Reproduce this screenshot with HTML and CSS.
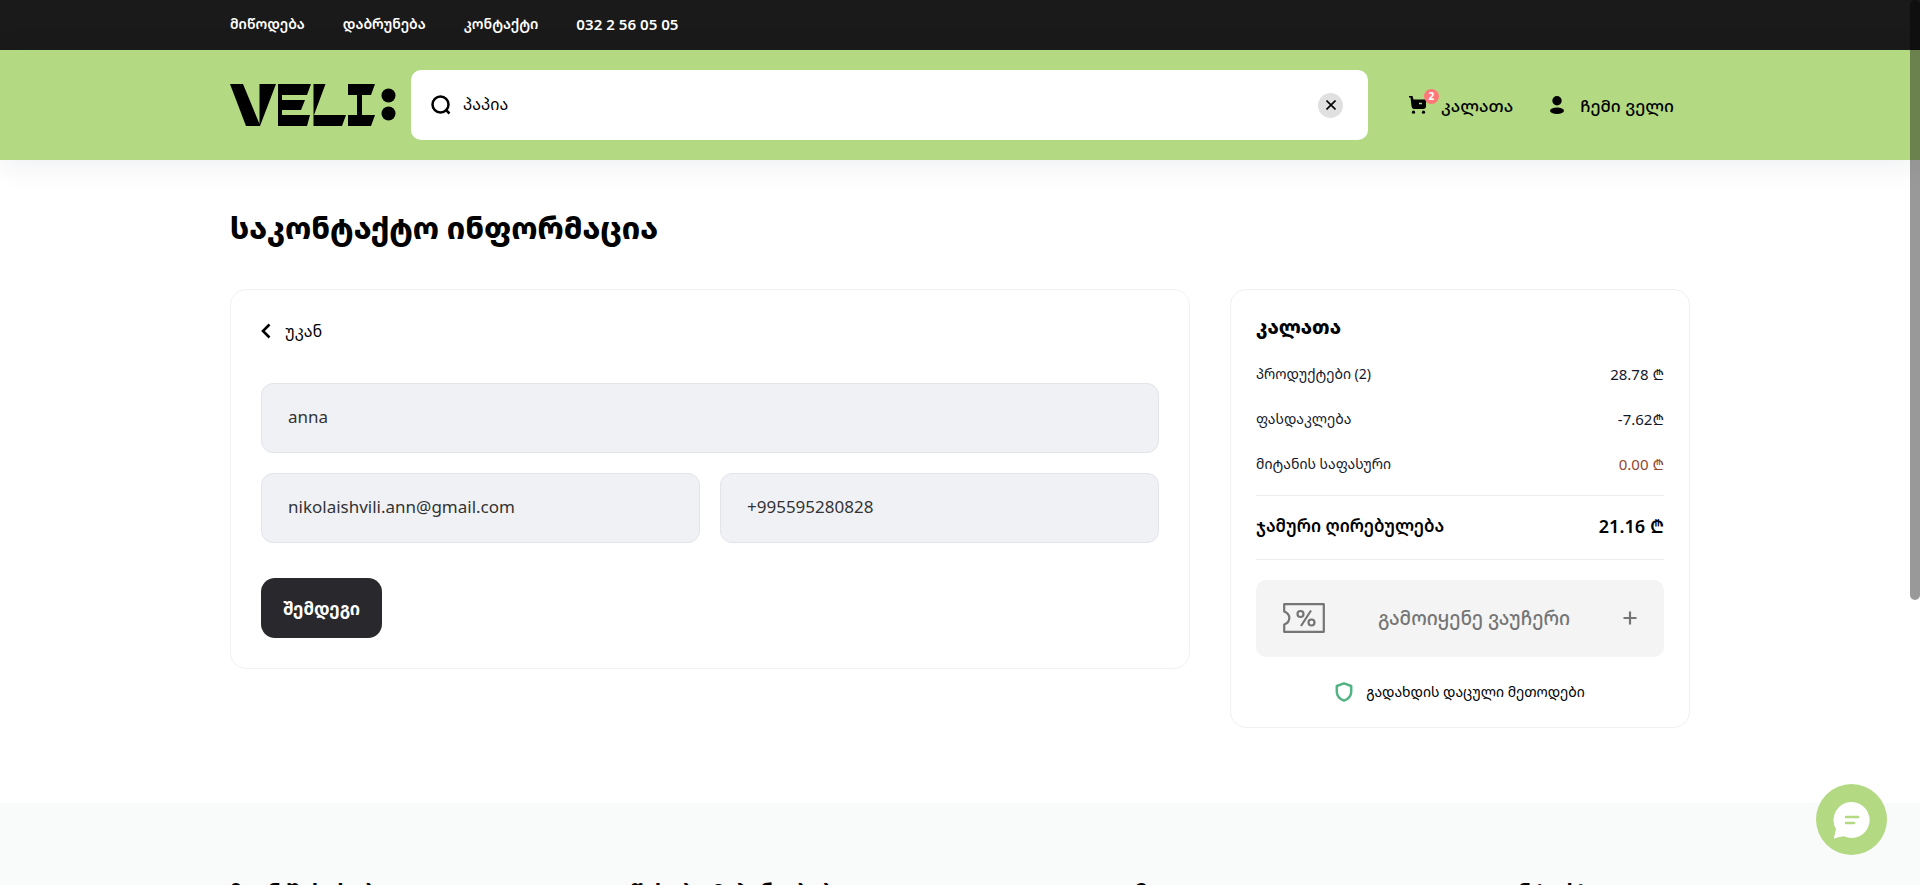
FILE: index.html
```html
<!DOCTYPE html>
<html lang="ka">
<head>
<meta charset="utf-8">
<meta name="viewport" content="width=device-width, initial-scale=1">
<title>VELI — საკონტაქტო ინფორმაცია</title>
<link rel="stylesheet" href="styles.css">
</head>
<body>
<nav class="topbar">
  <div class="container topbar-links">
    <a href="#">მიწოდება</a>
    <a href="#">დაბრუნება</a>
    <a href="#">კონტაქტი</a>
    <a class="phone" href="tel:0322560505">032 2 56 05 05</a>
  </div>
</nav>
<header class="header">
  <div class="container header-row">
    <a class="logo" href="#" aria-label="VELI">
      <svg width="166" height="42" viewBox="0 0 166 42" aria-hidden="true">
        <path d="M0 0H13L29.500 40V0H46L30 42H16ZM48 0H81L77 11H52V16H75L71 26H52V31H80L77 42H48ZM83.500 0H95.500L84 31H116L112 42H83.500ZM118 0H145L141 11H132V31H145L141 42H118V31H127V11H118Z"/>
        <circle cx="158.500" cy="11.500" r="7"/><circle cx="158.500" cy="29.500" r="7"/>
      </svg>
    </a>
    <form class="search" role="search">
      <svg class="search-icon" width="20" height="20" viewBox="0 0 20 20" fill="none" stroke="#000" stroke-width="2.500" aria-hidden="true"><circle cx="9.500" cy="9.500" r="8"/><path d="M14.500 14.500 18.500 18.500"/></svg>
      <input type="text" aria-label="ძიება" value="პაპია">
      <button class="clear" type="button" aria-label="გასუფთავება">
        <svg width="10" height="10" viewBox="0 0 10 10" fill="none" stroke="#000" stroke-width="1.600"><path d="M0.500 0.500 9.500 9.500M9.500 0.500 0.500 9.500"/></svg>
      </button>
    </form>
    <div class="actions">
      <a class="action action-cart" href="#">
        <span class="cart-icon">
          <svg width="18" height="18" viewBox="0 0 18 18" aria-hidden="true"><path d="M0 0H3.500L4.500 3.500H17V10Q17 13 14 13H5Q3 13 2.500 10L1.500 1.500H0Z"/><circle cx="4.500" cy="16.200" r="1.600"/><circle cx="14.500" cy="16.200" r="1.600"/><path d="M10 7.500H13" stroke="#b3d983" stroke-width="1.500"/></svg>
          <span class="badge">2</span>
        </span>
        <span>კალათა</span>
      </a>
      <a class="action action-user" href="#">
        <svg width="14" height="18" viewBox="0 0 14 18" aria-hidden="true"><circle cx="7" cy="4.700" r="4.700"/><ellipse cx="7" cy="14.800" rx="7" ry="3.200"/></svg>
        <span>ჩემი ველი</span>
      </a>
    </div>
  </div>
</header>
<main class="container main">
  <h1>საკონტაქტო ინფორმაცია</h1>
  <div class="columns">
    <form class="card contact">
      <a class="back" href="#">
        <svg width="10" height="16" viewBox="0 0 10 16" fill="none" stroke="#000" stroke-width="2.600" aria-hidden="true"><path d="M8.500 1.500 2 8 8.500 14.500"/></svg>
        <span>უკან</span>
      </a>
      <div class="fields">
        <input class="wide" type="text" aria-label="სახელი" value="anna">
        <input type="email" aria-label="ელფოსტა" value="nikolaishvili.ann@gmail.com">
        <input type="tel" aria-label="ტელეფონი" value="+995595280828">
      </div>
      <button class="next" type="button">შემდეგი</button>
    </form>
    <aside class="card cart">
      <h2>კალათა</h2>
      <dl class="rows">
        <div class="row"><dt>პროდუქტები (2)</dt><dd>28.78 ₾</dd></div>
        <div class="row"><dt>ფასდაკლება</dt><dd>-7.62₾</dd></div>
        <div class="row"><dt>მიტანის საფასური</dt><dd class="fee">0.00 ₾</dd></div>
        <div class="row total"><dt>ჯამური ღირებულება</dt><dd>21.16 ₾</dd></div>
      </dl>
      <button class="voucher" type="button">
        <svg width="42" height="30" viewBox="0 0 42 30" fill="none" stroke="#757575" stroke-width="2.200" aria-hidden="true"><path d="M1.200 1.200H40.800V28.800H1.200V21.500C8 19 8 11 1.200 8.500Z" stroke-linejoin="round"/><circle cx="17.500" cy="11" r="3"/><circle cx="28.500" cy="19.500" r="3"/><path d="M28 7.500 18 23"/></svg>
        <span>გამოიყენე ვაუჩერი</span>
        <svg width="14" height="14" viewBox="0 0 14 14" stroke="#757575" stroke-width="2.200" aria-hidden="true"><path d="M7 0.500V13.500M0.500 7H13.500"/></svg>
      </button>
      <p class="secure">
        <svg width="18" height="20" viewBox="0 0 18 20" fill="none" stroke="#53b483" stroke-width="2.500" stroke-linejoin="round" aria-hidden="true"><path d="M9 1.300 16.200 4V10Q16 16 9 18.700Q2 16 1.800 10V4Z"/></svg>
        <span>გადახდის დაცული მეთოდები</span>
      </p>
    </aside>
  </div>
</main>
<footer class="footer">
  <div class="container footer-grid">
    <h3>ჩვენ შესახებ</h3>
    <h3>წესები &amp; პირობები</h3>
    <h3>გამოგვყევი</h3>
    <h3>კონტაქტი</h3>
  </div>
</footer>
<button class="chat" type="button" aria-label="ჩატი">
  <svg width="38" height="38" viewBox="0 0 38 38" aria-hidden="true"><path d="M19 1A18 18 0 1 1 11 35.300Q6 35.500 1.500 37.500Q1 37.500 1 36.500L3 28A18 18 0 0 1 19 1Z" fill="#fff"/><path d="M13 16H25M13 22H21" stroke="#b3d983" stroke-width="2.500" stroke-linecap="round"/></svg>
</button>
<div class="scroll-thumb"></div>
</body>
</html>
```
FILE: styles.css
```css
* { box-sizing: border-box; }

body {
  margin: 0;
  height: 100vh;
  overflow: hidden;
  background: #fff;
  color: #000;
  font-family: "Noto Sans Georgian", "Noto Sans", "DejaVu Sans", sans-serif;
  font-size: 14px;
}

a { color: inherit; text-decoration: none; }
h1, h2, h3, p, dl, dd { margin: 0; }
svg { display: block; flex: none; }
input, button { font: inherit; }

.container {
  max-width: 1500px;
  margin: 0 auto;
  padding: 0 20px;
}

.topbar { background: #1a1a1a; color: #fff; }
.topbar-links {
  display: flex;
  gap: 38px;
  height: 50px;
  padding-bottom: 3px;
  align-items: center;
  font-size: 14px;
  font-weight: 600;
}
.phone { font-size: 15px; }

.header {
  background: #b3d983;
  box-shadow: 0 4px 30px rgba(30, 40, 60, 0.08);
}
.header-row {
  display: flex;
  align-items: center;
  height: 110px;
}
.logo { margin-right: 15px; }
.search {
  display: flex;
  flex: 1;
  align-items: center;
  gap: 12px;
  height: 70px;
  padding: 0 25px 0 20px;
  border-radius: 10px;
  background: #fff;
}
.search input {
  flex: 1;
  min-width: 0;
  padding: 0 0 2px;
  border: 0;
  outline: 0;
  background: none;
  font-size: 16px;
}
.clear {
  display: grid;
  place-items: center;
  width: 25px;
  height: 25px;
  padding: 0;
  border: 0;
  border-radius: 50%;
  background: #e0e0e0;
}
.actions {
  display: flex;
  justify-content: space-between;
  width: 322px;
  padding: 0 16px 0 41px;
  font-size: 17px;
  font-weight: 500;
}
.action { display: flex; align-items: center; }
.action-cart { gap: 14px; }
.action-user { gap: 16px; }
.cart-icon { position: relative; }
.badge {
  position: absolute;
  top: -7px;
  right: -12px;
  width: 15px;
  height: 15px;
  border-radius: 50%;
  background: #ff7878;
  color: #fff;
  font-size: 10px;
  font-weight: 700;
  line-height: 15px;
  text-align: center;
}

.main { padding-top: 48px; padding-bottom: 75px; }
h1 {
  margin-bottom: 41px;
  font-size: 30px;
  font-weight: 800;
  line-height: 40px;
}
.columns {
  display: grid;
  grid-template-columns: 24fr minmax(400px, 460px);
  gap: 40px;
  align-items: start;
}
.card {
  border: 1px solid #f2f2f5;
  border-radius: 16px;
}
.contact { padding: 29px 30px 30px; }
.back {
  display: inline-flex;
  align-items: center;
  gap: 14px;
  height: 24px;
  font-size: 16px;
}
.fields {
  display: grid;
  grid-template-columns: 1fr 1fr;
  gap: 20px;
  margin: 40px 0 35px;
}
.fields input {
  width: 100%;
  height: 70px;
  padding: 0 26px 3px;
  border: 1px solid #e3e4ea;
  border-radius: 12px;
  background: #f0f1f5;
  color: #333;
  font-size: 17px;
}
.fields .wide { grid-column: 1 / -1; }
.next {
  height: 60px;
  padding: 0 22px;
  border: 0;
  border-radius: 14px;
  background: #29282d;
  color: #fff;
  font-size: 17px;
  font-weight: 700;
}

.cart { padding: 23px 25px 25px; border-color: #f0f0f4; }
h2 { font-size: 19px; font-weight: 800; line-height: 28px; }
.rows { margin-top: 10px; }
.row {
  display: flex;
  justify-content: space-between;
  align-items: center;
  height: 45px;
  color: #14172b;
}
.row dd { font-size: 15px; }
.row .fee { color: #8f4632; }
.row.total {
  height: 65px;
  margin-top: 9px;
  padding-bottom: 4px;
  border: solid #ededed;
  border-width: 1px 0;
  color: #000;
  font-size: 17px;
  font-weight: 600;
}
.total dd { font-size: 18px; }
.voucher {
  display: flex;
  justify-content: space-between;
  align-items: center;
  width: 100%;
  height: 77px;
  margin-top: 20px;
  padding: 0 27px 2px;
  border: 0;
  border-radius: 10px;
  background: #f4f4f4;
  color: #757575;
  font-size: 19px;
  font-weight: 500;
}
.secure {
  display: flex;
  justify-content: center;
  align-items: center;
  gap: 13px;
  height: 20px;
  margin-top: 25px;
}
.secure span { padding-bottom: 2px; }

.footer { background: #f9fbfa; }
.footer-grid {
  display: grid;
  grid-template-columns: 400fr 480fr 378fr 202fr;
  padding-top: 74px;
}
h3 { font-size: 21px; line-height: 28px; white-space: nowrap; }

.chat {
  position: fixed;
  right: 33px;
  bottom: 30px;
  display: grid;
  place-items: center;
  width: 71px;
  height: 71px;
  padding: 0;
  border: 0;
  border-radius: 50%;
  background: #b3d983;
}
.scroll-thumb {
  position: fixed;
  top: 0;
  right: 0;
  width: 10px;
  height: 600px;
  border-radius: 5px;
  background: rgba(0, 0, 0, 0.4);
}
```
